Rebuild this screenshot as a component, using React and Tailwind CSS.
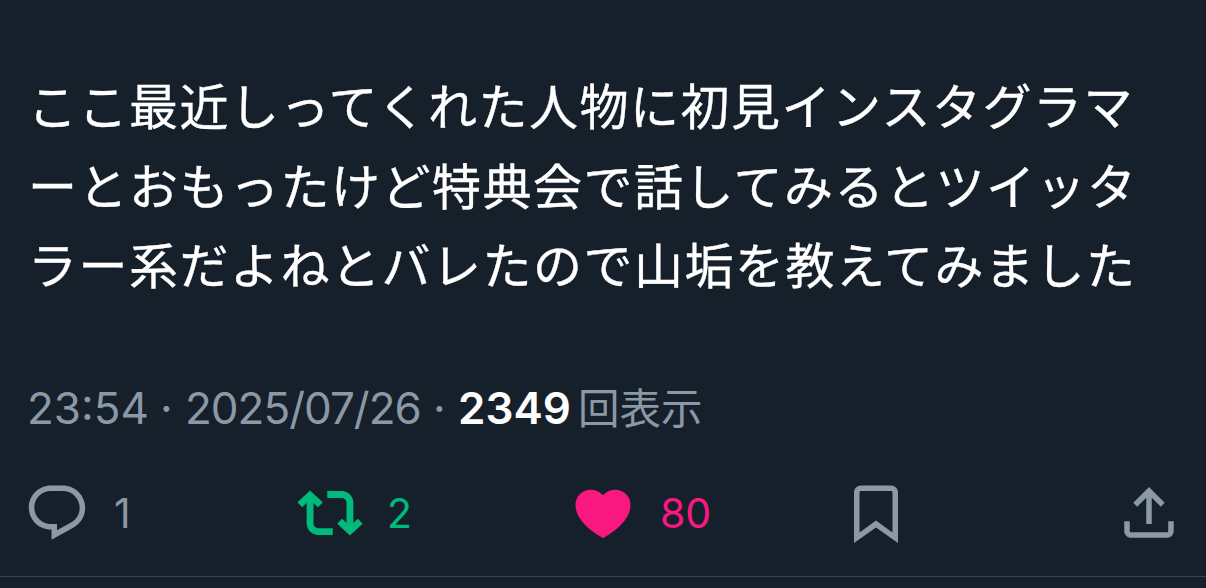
import React from 'react';
import clsx from 'clsx';

const lines = [
    'ここ最近しってくれた人物に初見インスタグラマ',
    'ーとおもったけど特典会で話してみるとツイッタ',
    'ラー系だよねとバレたので山垢を教えてみました',
];

const actions = [
    {
        name: 'reply',
        count: 1,
        color: 'text-[#8b98a5]',
        path: 'M1.751 10c0-4.42 3.584-8 8.005-8h4.366c4.49 0 8.129 3.64 8.129 8.13 0 2.96-1.607 5.68-4.196 7.11l-8.054 4.46v-3.69h-.067c-4.49.1-8.183-3.51-8.183-8.01zm8.005-6c-3.317 0-6.005 2.69-6.005 6 0 3.37 2.77 6.08 6.138 6.01l.351-.01h1.761v2.3l5.087-2.81c1.951-1.08 3.163-3.13 3.163-5.36 0-3.39-2.744-6.13-6.129-6.13H9.756z',
    },
    {
        name: 'repost',
        count: 2,
        color: 'text-[#00ba7c]',
        path: 'M4.75 3.79l4.603 4.3-1.706 1.82L6 8.38v7.37c0 .97.784 1.75 1.75 1.75H13V20H7.75c-2.347 0-4.25-1.9-4.25-4.25V8.38L1.853 9.91.147 8.09l4.603-4.3zm11.5 2.71H11V4h5.25c2.347 0 4.25 1.9 4.25 4.25v7.37l1.647-1.53 1.706 1.82-4.603 4.3-4.603-4.3 1.706-1.82L18 15.62V8.25c0-.97-.784-1.75-1.75-1.75z',
    },
    {
        name: 'like',
        count: 80,
        color: 'text-[#f91880]',
        path: 'M20.884 13.19c-1.351 2.48-4.001 5.12-8.379 7.67l-.503.3-.504-.3c-4.379-2.55-7.029-5.19-8.382-7.67-1.36-2.5-1.41-4.86-.514-6.67.887-1.79 2.647-2.91 4.601-3.01 1.651-.09 3.368.56 4.798 2.01 1.429-1.45 3.146-2.1 4.796-2.01 1.954.1 3.714 1.22 4.601 3.01.896 1.81.846 4.17-.514 6.67z',
    },
    {
        name: 'bookmark',
        color: 'text-[#8b98a5]',
        path: 'M4 4.5C4 3.12 5.119 2 6.5 2h11C18.881 2 20 3.12 20 4.5v18.44l-8-5.71-8 5.71V4.5zM6.5 4c-.276 0-.5.22-.5.5v14.56l6-4.29 6 4.29V4.5c0-.28-.224-.5-.5-.5h-11z',
    },
    {
        name: 'share',
        color: 'text-[#8b98a5]',
        path: 'M12 2.59l5.7 5.7-1.41 1.42L13 6.41V16h-2V6.41l-3.3 3.3-1.41-1.42L12 2.59zM21 15l-.02 3.51c0 1.38-1.12 2.49-2.5 2.49H5.5C4.11 21 3 19.88 3 18.5V15h2v3.5c0 .28.22.5.5.5h12.98c.28 0 .5-.22.5-.5L19 15h2z',
    },
];

const Action = ({ name, count, color, path }) => (
    <button aria-label={name} className={clsx('flex items-center gap-6', color)}>
        <svg viewBox="0 0 24 24" className="size-[66px] shrink-0 fill-current">
            <path d={path} />
        </svg>
        {count !== undefined && <span className="text-[41px] leading-[66px]">{count}</span>}
    </button>
);

const App = () => {
    return (
        <div className="h-[588px] w-[1206px] overflow-hidden bg-[#15202b] font-['Inter','Noto_Sans_CJK_JP',sans-serif]">
            <article className="flex h-[577px] flex-col border-b border-[#38444d] pt-[64px]">
                <p className="pl-[28px] font-['Noto_Sans_CJK_JP',sans-serif] text-[49px] leading-[79.5px] tracking-[1.5px] whitespace-nowrap text-white [-webkit-text-stroke:0.35px_white]">
                    {lines.map((line) => (
                        <span key={line} className="block">{line}</span>
                    ))}
                </p>

                {/* Time, date and views */}
                <div className="mt-[73px] flex h-16 items-center pl-[27px] text-[44px] whitespace-nowrap text-[#8b98a5]">
                    <span className="w-[133px]">23:54</span>
                    <span className="w-[25px]">·</span>
                    <span className="w-[248px] tracking-[-1px]">2025/07/26</span>
                    <span className="w-[25px]">·</span>
                    <span className="w-[120px] font-semibold text-white">2349</span>
                    <span className="pb-[3px] font-['Noto_Sans_CJK_JP',sans-serif] text-[41.5px]">回表示</span>
                </div>

                <div className="mt-auto mb-[30px] grid grid-cols-[repeat(4,273px)_66px] pl-6">
                    {actions.map((action) => (
                        <Action key={action.name} {...action} />
                    ))}
                </div>
            </article>
        </div>
    );
};

export default App;
